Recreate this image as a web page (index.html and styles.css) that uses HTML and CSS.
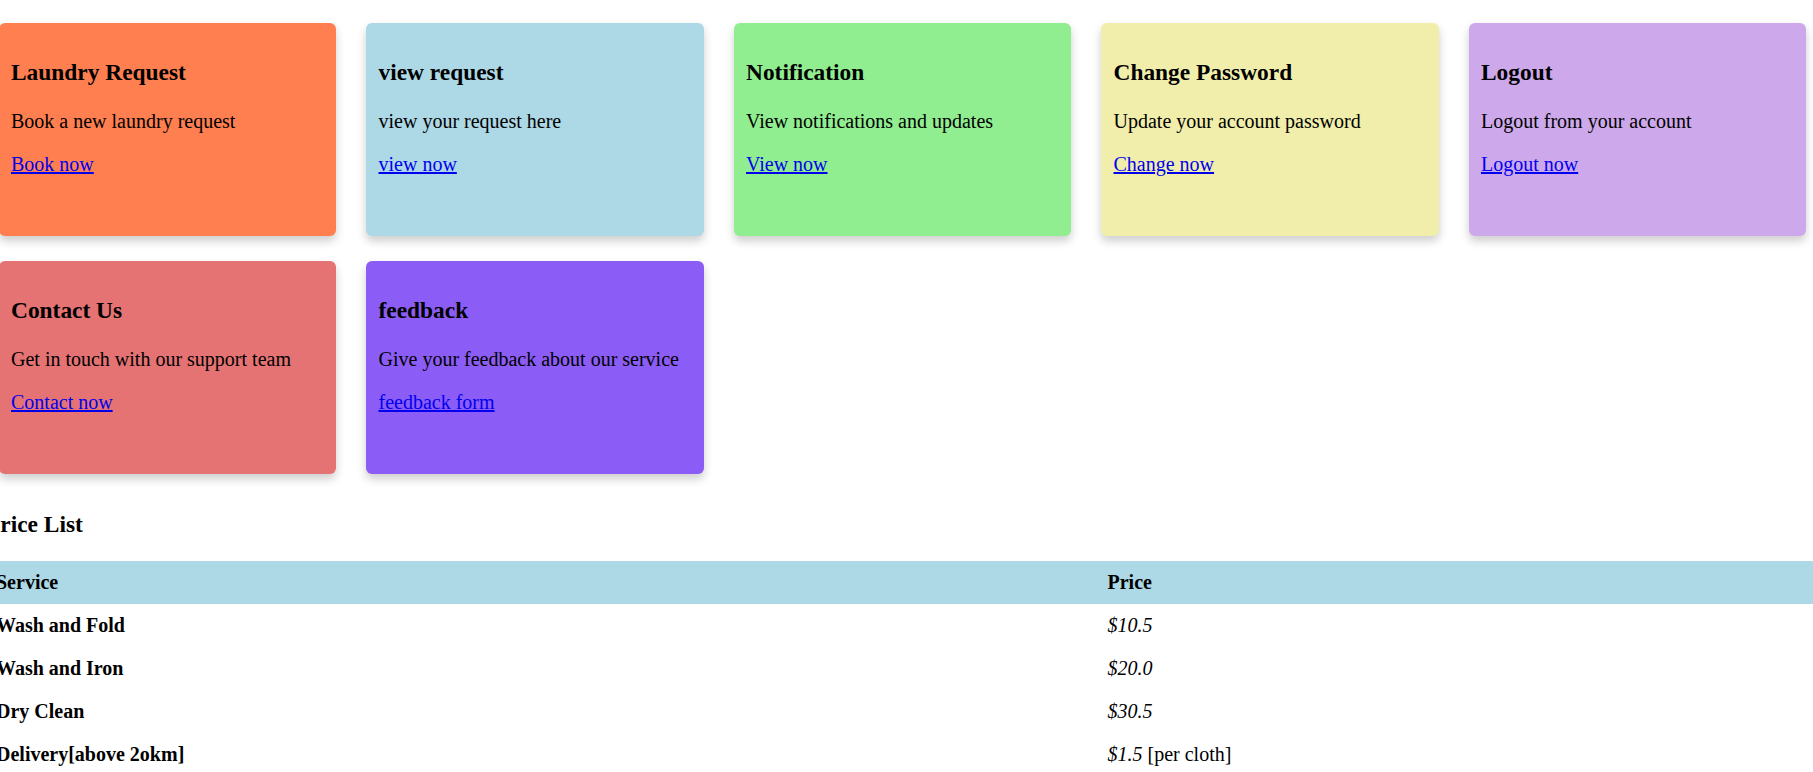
FILE: index.html
```html
<!DOCTYPE html>
<html lang="en">
<head>
<meta charset="utf-8">
<title>Dashboard</title>
<link rel="stylesheet" href="styles.css">
</head>
<body>
<div class="cards">
  <div class="card card-coral"><h3>Laundry Request</h3><p>Book a new laundry request</p><p><a href="#">Book now</a></p></div>
  <div class="card card-blue"><h3>view request</h3><p>view your request here</p><p><a href="#">view now</a></p></div>
  <div class="card card-green"><h3>Notification</h3><p>View notifications and updates</p><p><a href="#">View now</a></p></div>
  <div class="card card-yellow"><h3>Change Password</h3><p>Update your account password</p><p><a href="#">Change now</a></p></div>
  <div class="card card-lilac"><h3>Logout</h3><p>Logout from your account</p><p><a href="#">Logout now</a></p></div>
  <div class="card card-red"><h3>Contact Us</h3><p>Get in touch with our support team</p><p><a href="#">Contact now</a></p></div>
  <div class="card card-violet"><h3>feedback</h3><p>Give your feedback about our service</p><p><a href="#">feedback form</a></p></div>
</div>
<h3 class="price-title">Price List</h3>
<table class="price-table">
  <thead>
    <tr><th class="col-service">Service</th><th>Price</th></tr>
  </thead>
  <tbody>
    <tr><th>Wash and Fold</th><td><em>$10.5</em></td></tr>
    <tr><th>Wash and Iron</th><td><em>$20.0</em></td></tr>
    <tr><th>Dry Clean</th><td><em>$30.5</em></td></tr>
    <tr><th>Delivery[above 2okm]</th><td><em>$1.5</em> [per cloth]</td></tr>
  </tbody>
</table>
</body>
</html>
```
FILE: styles.css
```css
html {
  overflow: hidden;
  background: #ffffff;
}

body {
  margin: 10px -41px 10px -14px;
  font-family: "Liberation Serif", "Times New Roman", serif;
  font-size: 20px;
  color: #000000;
}

.cards {
  font-size: 20px;
}

.card {
  display: inline-block;
  width: 312.5px;
  height: 188px;
  padding: 13.5px 12.5px 11.5px;
  margin: 12.5px;
  border-radius: 6px;
  box-shadow: 0 5px 10px rgba(0, 0, 0, 0.2);
  vertical-align: baseline;
}

.card h3 {
  font-size: 23.4px;
  margin: 23.4px 0;
}

.card p {
  margin: 20px 0;
}

.card a {
  color: #0000ee;
  text-decoration: underline;
}

.card-coral { background: #ff7f50; }
.card-blue { background: #add8e6; }
.card-green { background: #90ee90; }
.card-yellow { background: #f0eeaa; }
.card-lilac { background: #cda9eb; }
.card-red { background: #e57373; }
.card-violet { background: #8b5cf6; }

.price-title {
  font-size: 23.4px;
  margin: 25px 0 23.4px;
}

.price-table {
  width: 100%;
  border-collapse: collapse;
  font-size: 20px;
}

.price-table th,
.price-table td {
  padding: 10px;
  text-align: left;
}

.price-table thead tr {
  background: #add8e6;
}

.col-service {
  width: 1091.5px;
}
```
